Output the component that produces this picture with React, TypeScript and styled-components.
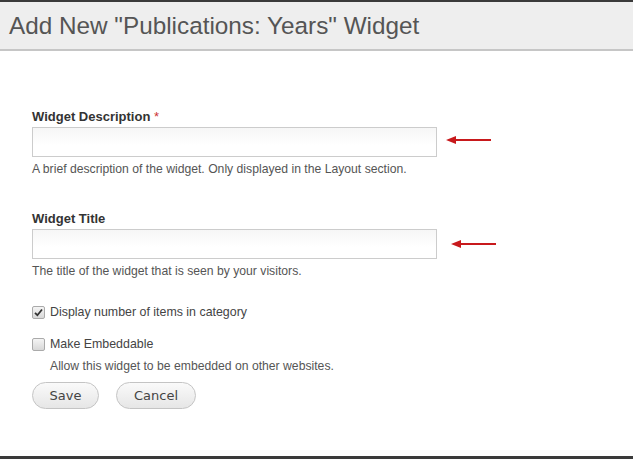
import styled, { createGlobalStyle } from 'styled-components';

const GlobalStyle = createGlobalStyle`
  html, body {
    margin: 0;
    padding: 0;
    background: #fff;
    font-family: "Liberation Sans", Arial, sans-serif;
  }
`;

const Page = styled.div`
  width: 633px;
  height: 459px;
  display: flex;
  flex-direction: column;
  border-top: 2px solid #3a3a3a;
  border-bottom: 3px solid #3a3a3a;
  box-sizing: border-box;
  overflow: hidden;
`;

const Header = styled.div`
  background: #eeeeee;
  border-bottom: 2px solid #c6c6c6;
  height: 47px;
  display: flex;
  align-items: center;
  padding-left: 9px;
`;

const Title = styled.h1`
  margin: 0;
  font-size: 24.3px;
  font-weight: normal;
  color: #555;
`;

const Form = styled.form`
  flex: 1;
  display: flex;
  flex-direction: column;
  padding: 58px 0 0 32px;
`;

const Field = styled.div<{ $gap?: number }>`
  display: flex;
  flex-direction: column;
  margin-bottom: ${(p) => p.$gap ?? 0}px;
`;

const Label = styled.label`
  font-size: 13px;
  font-weight: bold;
  color: #333;
  margin-bottom: 3px;
`;

const Required = styled.span`
  color: #c33;
  font-weight: normal;
`;

const InputRow = styled.div`
  display: flex;
  align-items: center;
`;

const TextInput = styled.input`
  width: 405px;
  height: 30px;
  box-sizing: border-box;
  border: 1px solid #ccc;
  background: linear-gradient(#f6f6f6, #fff 60%);
  padding: 0 6px;
  font-size: 13px;
  margin: 0;
`;

const Arrow = styled.svg<{ $offset: number; $lift: number }>`
  margin-left: ${(p) => p.$offset}px;
  margin-top: ${(p) => -p.$lift}px;
`;

const Help = styled.div<{ $indent?: number; $top?: number }>`
  font-size: 12.2px;
  color: #555;
  margin-top: ${(p) => p.$top ?? 5}px;
  margin-left: ${(p) => p.$indent ?? 0}px;
`;

const CheckRow = styled.label`
  display: flex;
  align-items: center;
  gap: 5px;
  font-size: 12.4px;
  color: #444;
`;

const CheckBox = styled.span`
  width: 11px;
  height: 11px;
  border: 1px solid #aaa;
  border-radius: 2px;
  background: linear-gradient(#f4f4f4, #d8d8d8);
  display: flex;
  align-items: center;
  justify-content: center;
`;

const Buttons = styled.div`
  display: flex;
  gap: 17px;
  margin-top: 9px;
`;

const Button = styled.button<{ $width: number }>`
  width: ${(p) => p.$width}px;
  height: 27px;
  border: 1px solid #c4c4c4;
  border-radius: 14px;
  background: linear-gradient(#fafafa, #e6e6e6);
  font-family: "DejaVu Sans", sans-serif;
  font-size: 13px;
  color: #444;
  padding: 0;
  cursor: pointer;
`;

function RedArrow({ offset, lift }: { offset: number; lift: number }) {
  return (
    <Arrow $offset={offset} $lift={lift} width="46" height="10" viewBox="0 0 46 10">
      <line x1="8" y1="5" x2="45" y2="5" stroke="#c8191c" strokeWidth="2" />
      <polygon points="0,5 10,1 10,9" fill="#c8191c" />
    </Arrow>
  );
}

function Check({ checked }: { checked?: boolean }) {
  return (
    <CheckBox>
      {checked && (
        <svg width="9" height="9" viewBox="0 0 9 9">
          <path d="M1 4.8 L3.4 7.2 L8 1.5" stroke="#333" strokeWidth="1.8" fill="none" />
        </svg>
      )}
    </CheckBox>
  );
}

export default function App() {
  return (
    <>
      <GlobalStyle />
      <Page>
        <Header>
          <Title>Add New "Publications: Years" Widget</Title>
        </Header>
        <Form onSubmit={(e) => e.preventDefault()}>
          <Field $gap={35}>
            <Label>
              Widget Description <Required>*</Required>
            </Label>
            <InputRow>
              <TextInput />
              <RedArrow offset={9} lift={4} />
            </InputRow>
            <Help>A brief description of the widget. Only displayed in the Layout section.</Help>
          </Field>
          <Field $gap={27}>
            <Label>Widget Title</Label>
            <InputRow>
              <TextInput />
              <RedArrow offset={14} lift={0} />
            </InputRow>
            <Help>The title of the widget that is seen by your visitors.</Help>
          </Field>
          <Field $gap={18}>
            <CheckRow>
              <Check checked />
              Display number of items in category
            </CheckRow>
          </Field>
          <Field>
            <CheckRow>
              <Check />
              Make Embeddable
            </CheckRow>
            <Help $indent={18} $top={8}>Allow this widget to be embedded on other websites.</Help>
          </Field>
          <Buttons>
            <Button $width={67} type="submit">Save</Button>
            <Button $width={80} type="button">Cancel</Button>
          </Buttons>
        </Form>
      </Page>
    </>
  );
}
